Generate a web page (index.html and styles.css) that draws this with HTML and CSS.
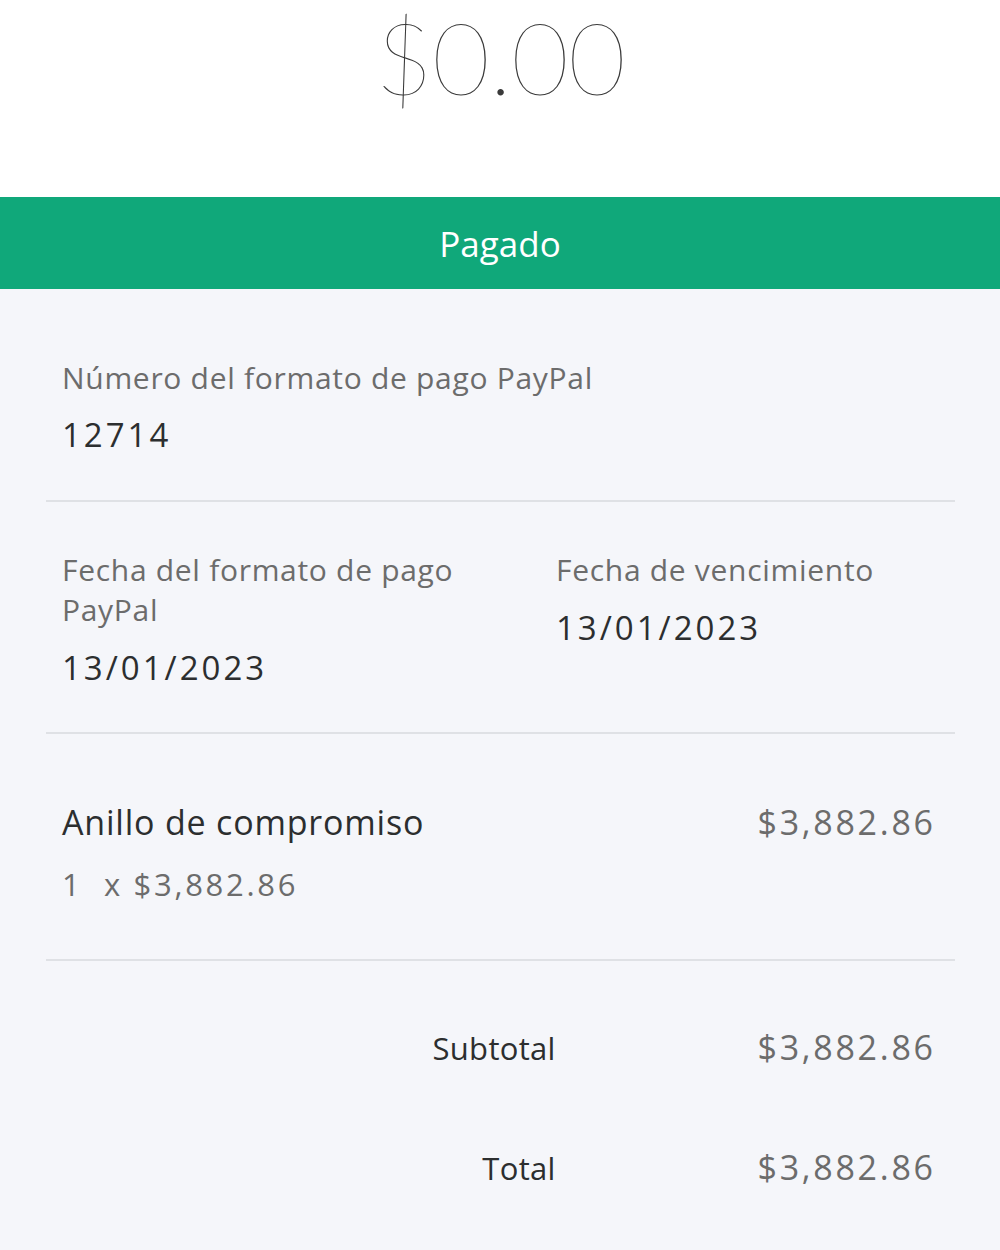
FILE: index.html
```html
<!DOCTYPE html>
<html lang="es">
<head>
<meta charset="utf-8">
<link rel="stylesheet" href="styles.css">
</head>
<body>
<div class="page">
  <header class="hero">
    <div class="amount">$0.00</div>
  </header>
  <div class="status">Pagado</div>
  <main class="details">
    <section class="block block-number">
      <div class="label">Número del formato de pago PayPal</div>
      <div class="value">12714</div>
    </section>
    <section class="block block-dates">
      <div class="col col-left">
        <div class="label label-wrap">Fecha del formato de pago PayPal</div>
        <div class="value">13/01/2023</div>
      </div>
      <div class="col col-right">
        <div class="label">Fecha de vencimiento</div>
        <div class="value">13/01/2023</div>
      </div>
    </section>
    <section class="block block-item">
      <div class="item-row">
        <div class="item-name">Anillo de compromiso</div>
        <div class="price">$3,882.86</div>
      </div>
      <div class="item-qty">1&nbsp; x $3,882.86</div>
    </section>
    <section class="totals">
      <div class="total-row row-subtotal">
        <div class="total-label">Subtotal</div>
        <div class="price">$3,882.86</div>
      </div>
      <div class="total-row row-total">
        <div class="total-label">Total</div>
        <div class="price">$3,882.86</div>
      </div>
    </section>
  </main>
</div>
</body>
</html>
```

FILE: styles.css
```css
* { box-sizing: border-box; }
html, body { margin: 0; padding: 0; }
body {
  width: 1000px;
  height: 1250px;
  overflow: hidden;
  background: #f5f6fa;
  font-family: "Open Sans", "Noto Sans", "Liberation Sans", sans-serif;
}
.page { display: flex; flex-direction: column; }
.hero {
  background: #ffffff;
  height: 197px;
  display: flex;
  justify-content: center;
  align-items: flex-start;
}
.amount {
  font-family: "Lato", "Open Sans", sans-serif;
  font-weight: 100;
  font-size: 100px;
  line-height: 112px;
  color: #3a3a3a;
  margin-top: 0;
  letter-spacing: -1px;
}
.status {
  height: 92px;
  background: #10a87a;
  color: #ffffff;
  font-size: 35px;
  display: flex;
  align-items: center;
  justify-content: center;
}
.details {
  padding: 0 45px 0 46px;
}
.block {
  border-bottom: 2px solid #dfe1e5;
  padding: 0 16px;
}
.label {
  color: #6c6c6c;
  font-size: 30px;
  line-height: 40px;
  letter-spacing: 0.7px;
}
.value {
  color: #2c2e2f;
  font-size: 33px;
  line-height: 40px;
  letter-spacing: 3px;
}
.block-number { padding-top: 69px; padding-bottom: 45px; }
.block-number .value { margin-top: 17px; }
.block-dates {
  display: flex;
  padding-top: 48px;
  padding-bottom: 44px;
}
.col-left { width: 494px; }
.label-wrap { width: 410px; }
.col .value { margin-top: 18px; }
.block-item { padding-top: 66px; padding-bottom: 55px; padding-right: 22px; }
.item-row {
  display: flex;
  justify-content: space-between;
  align-items: baseline;
}
.item-name { color: #2c2e2f; font-size: 34px; line-height: 44px; letter-spacing: 0.8px; }
.price { color: #6c6c6c; font-size: 34px; line-height: 44px; letter-spacing: 2.7px; }
.item-qty { color: #6c6c6c; font-size: 31px; line-height: 40px; margin-top: 20px; letter-spacing: 2.7px; }
.totals { padding: 0 22px 0 0; }
.total-row {
  display: flex;
  justify-content: flex-end;
  align-items: baseline;
}
.total-label {
  color: #2c2e2f;
  font-size: 31px;
  line-height: 44px;
  width: 507px;
  text-align: right;
  letter-spacing: 0.3px;
}
.total-row .price { width: 380px; text-align: right; margin-right: -2.7px; }
.item-row .price { margin-right: -2.7px; }
.row-subtotal { margin-top: 64px; }
.row-total { margin-top: 75px; }
```
